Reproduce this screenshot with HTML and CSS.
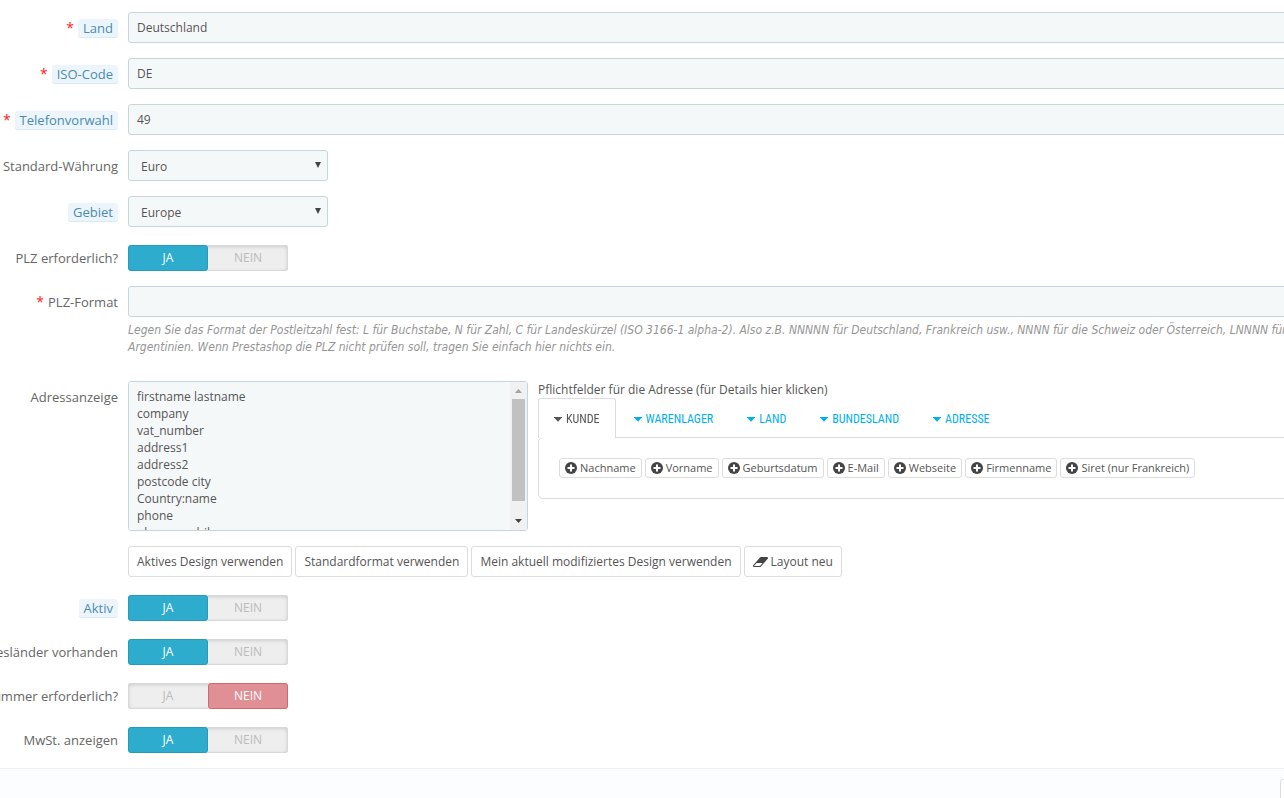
FILE: index.html
```html
<!DOCTYPE html>
<html lang="de">
<head>
    <meta charset="utf-8">
    <title>Land bearbeiten</title>
    <link rel="stylesheet" href="styles.css">
</head>
<body>
    <svg class="sprite" aria-hidden="true">
        <symbol id="plus" viewBox="0 0 12 12">
            <circle cx="6" cy="6" r="6"/>
            <path d="M5 2.5h2V5h2.5v2H7v2.5H5V7H2.5V5H5z" fill="#fff"/>
        </symbol>
        <symbol id="eraser" viewBox="0 0 1920 1280">
            <path d="M896 1152L1232 768H464L128 1152H896zM1909 75Q1924 109 1918.5 145.5T1889 209L993 1233Q955 1280 896 1280H128Q90 1280 58.5 1259.5T11 1205Q-4 1171 1.5 1134.5T31 1071L927 47Q965 0 1024 0H1792Q1830 0 1861.5 20.5T1909 75z" fill-rule="evenodd"/>
        </symbol>
        <symbol id="caret" viewBox="0 0 8 5">
            <path d="M0 0h8v.6L4 4.8 0 .6z"/>
        </symbol>
    </svg>

    <form class="form">
        <div class="row">
            <label class="label" for="name"><span class="required">*</span><span class="hint">Land</span></label>
            <div class="field"><input class="input" type="text" id="name" value="Deutschland"></div>
        </div>
        <div class="row">
            <label class="label" for="iso"><span class="required">*</span><span class="hint">ISO-Code</span></label>
            <div class="field"><input class="input" type="text" id="iso" value="DE"></div>
        </div>
        <div class="row">
            <label class="label" for="prefix"><span class="required">*</span><span class="hint">Telefonvorwahl</span></label>
            <div class="field"><input class="input" type="text" id="prefix" value="49"></div>
        </div>
        <div class="row">
            <label class="label" for="currency">Standard-Währung</label>
            <div class="field">
                <div class="select-wrap">
                    <select class="select" id="currency"><option>Euro</option></select>
                </div>
            </div>
        </div>
        <div class="row">
            <label class="label" for="zone"><span class="hint">Gebiet</span></label>
            <div class="field">
                <div class="select-wrap">
                    <select class="select" id="zone"><option>Europe</option></select>
                </div>
            </div>
        </div>
        <div class="row">
            <span class="label" id="zip-label">PLZ erforderlich?</span>
            <div class="switch" role="radiogroup" aria-labelledby="zip-label">
                <input type="radio" name="zip" id="zip-on" checked><label for="zip-on">JA</label>
                <input type="radio" name="zip" id="zip-off"><label class="off" for="zip-off">NEIN</label>
            </div>
        </div>
        <div class="row">
            <label class="label" for="zip-format"><span class="required">*</span>PLZ-Format</label>
            <div class="field">
                <input class="input" type="text" id="zip-format">
                <p class="help">Legen Sie das Format der Postleitzahl fest: L für Buchstabe, N für Zahl, C für Landeskürzel (ISO 3166-1 alpha-2). Also z.B. NNNNN für Deutschland, Frankreich usw., NNNN für die Schweiz oder Österreich, LNNNN für<br>Argentinien. Wenn Prestashop die PLZ nicht prüfen soll, tragen Sie einfach hier nichts ein.</p>
            </div>
        </div>
        <div class="row">
            <label class="label" for="layout">Adressanzeige</label>
            <div class="field">
                <div class="address">
                    <div class="textarea-wrap">
                        <textarea class="textarea" id="layout">firstname lastname
company
vat_number
address1
address2
postcode city
Country:name
phone
phone_mobile
</textarea>
                        <div class="scrollbar" aria-hidden="true">
                            <svg class="scroll-arrow up" viewBox="0 0 7 4"><path d="M0 4L3.5 0 7 4z"/></svg>
                            <div class="scroll-track"><div class="scroll-thumb"></div></div>
                            <svg class="scroll-arrow" viewBox="0 0 7 4"><path d="M0 0h7L3.5 4z"/></svg>
                        </div>
                    </div>
                    <div class="required-fields">
                        <div class="caption">Pflichtfelder für die Adresse (für Details hier klicken)</div>
                        <nav class="tabs">
                            <a class="tab active" href="#kunde"><svg class="caret"><use href="#caret"/></svg>KUNDE</a>
                            <a class="tab" href="#warenlager"><svg class="caret"><use href="#caret"/></svg>WARENLAGER</a>
                            <a class="tab" href="#land"><svg class="caret"><use href="#caret"/></svg>LAND</a>
                            <a class="tab" href="#bundesland"><svg class="caret"><use href="#caret"/></svg>BUNDESLAND</a>
                            <a class="tab" href="#adresse"><svg class="caret"><use href="#caret"/></svg>ADRESSE</a>
                        </nav>
                        <div class="panel" id="kunde">
                            <button type="button" class="tag"><svg class="plus"><use href="#plus"/></svg>Nachname</button>
                            <button type="button" class="tag"><svg class="plus"><use href="#plus"/></svg>Vorname</button>
                            <button type="button" class="tag"><svg class="plus"><use href="#plus"/></svg>Geburtsdatum</button>
                            <button type="button" class="tag"><svg class="plus"><use href="#plus"/></svg>E-Mail</button>
                            <button type="button" class="tag"><svg class="plus"><use href="#plus"/></svg>Webseite</button>
                            <button type="button" class="tag"><svg class="plus"><use href="#plus"/></svg>Firmenname</button>
                            <button type="button" class="tag"><svg class="plus"><use href="#plus"/></svg>Siret (nur Frankreich)</button>
                        </div>
                    </div>
                </div>
                <div class="actions">
                    <button type="button" class="btn">Aktives Design verwenden</button>
                    <button type="button" class="btn">Standardformat verwenden</button>
                    <button type="button" class="btn">Mein aktuell modifiziertes Design verwenden</button>
                    <button type="button" class="btn"><svg class="eraser"><use href="#eraser"/></svg>Layout neu</button>
                </div>
            </div>
        </div>
        <div class="row">
            <span class="label" id="active-label"><span class="hint">Aktiv</span></span>
            <div class="switch" role="radiogroup" aria-labelledby="active-label">
                <input type="radio" name="active" id="active-on" checked><label for="active-on">JA</label>
                <input type="radio" name="active" id="active-off"><label class="off" for="active-off">NEIN</label>
            </div>
        </div>
        <div class="row">
            <span class="label" id="states-label">Bundesländer vorhanden</span>
            <div class="switch" role="radiogroup" aria-labelledby="states-label">
                <input type="radio" name="states" id="states-on" checked><label for="states-on">JA</label>
                <input type="radio" name="states" id="states-off"><label class="off" for="states-off">NEIN</label>
            </div>
        </div>
        <div class="row">
            <span class="label" id="tax-id-label">Steuernummer erforderlich?</span>
            <div class="switch" role="radiogroup" aria-labelledby="tax-id-label">
                <input type="radio" name="tax-id" id="tax-id-on"><label for="tax-id-on">JA</label>
                <input type="radio" name="tax-id" id="tax-id-off" checked><label class="off" for="tax-id-off">NEIN</label>
            </div>
        </div>
        <div class="row">
            <span class="label" id="tax-label">MwSt. anzeigen</span>
            <div class="switch" role="radiogroup" aria-labelledby="tax-label">
                <input type="radio" name="tax" id="tax-on" checked><label for="tax-on">JA</label>
                <input type="radio" name="tax" id="tax-off"><label class="off" for="tax-off">NEIN</label>
            </div>
        </div>
        <div class="footer">
            <button class="save" type="submit" aria-label="Speichern"></button>
        </div>
    </form>
</body>
</html>
```

FILE: styles.css
```css
* {
    box-sizing: border-box;
}

html {
    height: 100%;
    overflow: hidden;
}

body {
    height: 100%;
    margin: 0;
    overflow: hidden;
    font-family: "Open Sans", sans-serif;
    font-size: 12px;
    line-height: 17px;
    color: #555;
    background: #fff;
}

input, select, textarea, button {
    font: inherit;
    color: inherit;
}

.sprite {
    display: none;
}

/* the form runs on past the right edge of the window */
.form {
    display: flex;
    flex-direction: column;
    gap: 15px;
    min-height: 100%;
    margin-right: -80px;
    padding-top: 12px;
}

.row {
    display: flex;
}

.label {
    display: flex;
    flex: none;
    justify-content: flex-end;
    width: 128px;
    padding: 7px 10px 0 0;
    font-size: 13px;
    line-height: 18px;
    color: #666;
    white-space: nowrap;
}

.required {
    margin-right: 4px;
    font-size: 14px;
    color: #ff2020;
}

.hint {
    height: 19px;
    padding: 0 5px;
    color: #4b8bb0;
    background: #ebf5fb;
    border-bottom: 1px solid #d5ebf5;
    border-radius: 3px;
}

.field {
    flex: 1;
    min-width: 0;
}

.input, .select, .textarea {
    display: block;
    width: 100%;
    height: 31px;
    padding: 6px 8px;
    background: #f5f8f9;
    border: 1px solid #c7d6db;
    border-radius: 3px;
    outline: none;
}

.select-wrap {
    position: relative;
    width: 200px;
}

.select {
    padding: 7px 12px 5px;
    appearance: none;
}

.select-wrap::after {
    content: "";
    position: absolute;
    top: 12px;
    right: 7px;
    border: 3px solid transparent;
    border-top: 6px solid #444;
    border-bottom: 0;
    pointer-events: none;
}

.help {
    margin: 5px 0 10px;
    font-family: "DejaVu Sans Condensed", "Open Sans", sans-serif;
    font-style: italic;
    color: #959595;
    white-space: nowrap;
}

.switch {
    display: flex;
    position: relative;
    width: 160px;
    height: 26px;
    margin-top: 3px;
    background: #eee;
    border-radius: 3px;
    box-shadow: inset 0 0 0 1px #d9d9d9, inset 0 1px 4px rgba(0, 0, 0, .2);
}

.switch input {
    position: absolute;
    margin: 0;
    opacity: 0;
}

.switch label {
    flex: 1;
    border: 1px solid transparent;
    border-radius: 3px;
    line-height: 24px;
    text-align: center;
    color: #bbb;
}

.switch input:checked + label {
    color: #fff;
    background: #2eacce;
    border-color: #2899b7;
}

.switch input:checked + .off {
    background: #e08f95;
    border-color: #cf6a72;
}

.address {
    display: flex;
    gap: 10px;
}

.textarea-wrap {
    position: relative;
    flex: none;
    width: 400px;
}

.textarea {
    height: 150px;
    resize: none;
    scrollbar-width: none;
}

.scrollbar {
    position: absolute;
    top: 1px;
    right: 1px;
    bottom: 1px;
    display: flex;
    flex-direction: column;
    align-items: center;
    width: 17px;
    padding: 7px 0;
    background: #f1f1f1;
    pointer-events: none;
}

.scroll-arrow {
    width: 7px;
    height: 4px;
    fill: #444;
}

.scroll-arrow.up {
    fill: #a3a3a3;
}

.scroll-track {
    flex: 1;
    width: 13px;
    padding: 6px 0;
}

.scroll-thumb {
    height: 102px;
    background: #c1c1c1;
}

.required-fields {
    flex: 1;
}

.tabs {
    display: flex;
    gap: 2px;
    height: 39px;
}

.tab {
    display: flex;
    align-items: center;
    gap: 4px;
    padding: 2px 15px 0;
    border: 1px solid transparent;
    border-bottom: 0;
    font-family: "Liberation Sans Narrow", "Roboto Condensed", sans-serif;
    font-size: 12px;
    color: #00aff0;
    text-decoration: none;
}

/* covers the panel's top border */
.tab.active {
    position: relative;
    height: 40px;
    color: #555;
    background: #fff;
    border-color: #ddd;
    border-radius: 3px 3px 0 0;
}

.caret {
    width: 8px;
    height: 5px;
    fill: currentColor;
}

.panel {
    display: flex;
    gap: 3px;
    padding: 20px;
    border: 1px solid #ddd;
    border-radius: 5px;
}

.tag {
    display: flex;
    align-items: center;
    gap: 3px;
    height: 20px;
    padding: 0 5px 1px;
    font-size: 11px;
    background: #fff;
    border: 1px solid #ddd;
    border-radius: 3px;
    white-space: nowrap;
}

.plus {
    width: 12px;
    height: 12px;
    fill: #444;
}

.actions {
    display: flex;
    gap: 3px;
    margin-top: 15px;
}

.btn {
    display: flex;
    align-items: center;
    gap: 3px;
    height: 31px;
    padding: 0 8px;
    background: #fff;
    border: 1px solid #ddd;
    border-radius: 3px;
    white-space: nowrap;
}

.eraser {
    width: 15px;
    height: 10px;
    fill: #444;
}

.footer {
    display: flex;
    flex: 1;
    justify-content: flex-end;
    padding: 10px 20px 0 0;
    background: #fcfdfe;
    border-top: 1px solid #eee;
}

.save {
    width: 64px;
    height: 60px;
    background: #fff;
    border: 1px solid #ddd;
    border-radius: 3px;
}
```
